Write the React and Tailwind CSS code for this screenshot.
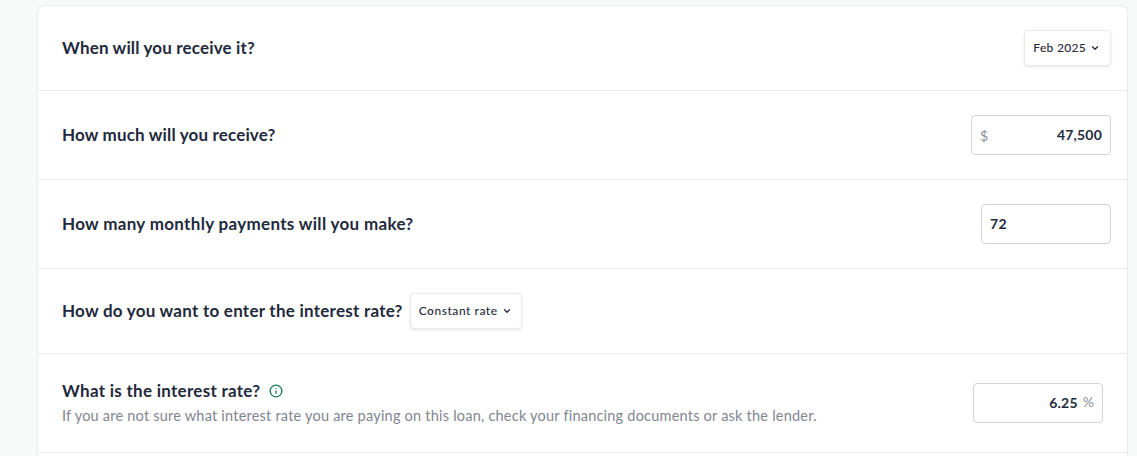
import React from "react";
import { ChevronDown, Info } from "lucide-react";

const font = "font-['Lato','Noto_Sans',sans-serif]";
const Title = ({ children, spacing }) => (
  <span className={`text-[17px] leading-6 font-bold text-[#1f2a3d] ${spacing}`}>{children}</span>
);
const Select = ({ label, wide }) => (
  <button className={`flex h-[36px] items-center rounded-[4px] border border-[#e7e9ec] bg-white pl-[8px] text-[12px] font-medium text-[#1f2a3d] shadow-[0_1px_3px_rgba(0,0,0,0.1)] ${wide ? "pr-[9px] tracking-[0.55px]" : "pr-[10px] tracking-[0.3px]"}`}>
    <span>{label}</span>
    <ChevronDown size={10} strokeWidth={3} className="ml-[4px]" />
  </button>
);

export default function App() {
  return (
    <div className={`${font} h-[456px] w-[1137px] overflow-hidden bg-[#f7f9f8] pt-[5px] pl-[37px] pr-[9px]`}>
      <div className="rounded-t-[8px] border border-b-0 border-[#e9ebee] bg-white">
        <div className="flex items-center justify-between border-b border-[#e9ebee] py-6 pl-6 pr-4">
          <Title spacing="tracking-[0.16px]">When will you receive it?</Title>
          <Select label="Feb 2025" />
        </div>
        <div className="flex items-center justify-between border-b border-[#e9ebee] py-6 pl-6 pr-4">
          <Title spacing="tracking-[0.16px]">How much will you receive?</Title>
          <div className="flex h-10 w-[140px] items-center justify-between rounded-[4px] border border-[#d0d3da] px-2 text-sm">
            <span className="mt-[2px] text-[#8a8f99]">$</span>
            <span className="font-bold tracking-[0.2px] text-[#1f2a3d]">47,500</span>
          </div>
        </div>
        <div className="flex items-center justify-between border-b border-[#e9ebee] py-6 pl-6 pr-4">
          <Title spacing="tracking-[0.32px]">How many monthly payments will you make?</Title>
          <div className="flex h-10 w-[130px] items-center rounded-[4px] border border-[#d0d3da] px-2 text-sm font-bold tracking-[0.4px] text-[#1f2a3d]">
            72
          </div>
        </div>
        <div className="flex items-center gap-[7px] border-b border-[#e9ebee] px-6 py-6">
          <Title spacing="tracking-[0.25px]">How do you want to enter the interest rate?</Title>
          <Select label="Constant rate" wide />
        </div>
        <div className="flex items-center justify-between border-b border-[#e9ebee] pt-[25px] pb-[26px] pl-6 pr-6">
          <div className="flex flex-col">
            <div className="flex items-center gap-[9px]">
              <Title spacing="tracking-[0.28px]">What is the interest rate?</Title>
              <Info size={14} strokeWidth={2.25} className="text-[#1c7a55]" />
            </div>
            <span className="mt-[3px] text-[14.5px] leading-5 tracking-[0.22px] text-[#7f8591]">
              If you are not sure what interest rate you are paying on this loan, check your financing documents or ask the lender.
            </span>
          </div>
          <div className="flex h-10 w-[130px] items-center justify-end gap-[5px] rounded-[4px] border border-[#d0d3da] px-2 text-sm">
            <span className="font-bold tracking-[0.2px] text-[#1f2a3d]">6.25</span>
            <span className="mb-[2px] text-[#8a8f99]">%</span>
          </div>
        </div>
        <div className="h-5" />
      </div>
    </div>
  );
}
